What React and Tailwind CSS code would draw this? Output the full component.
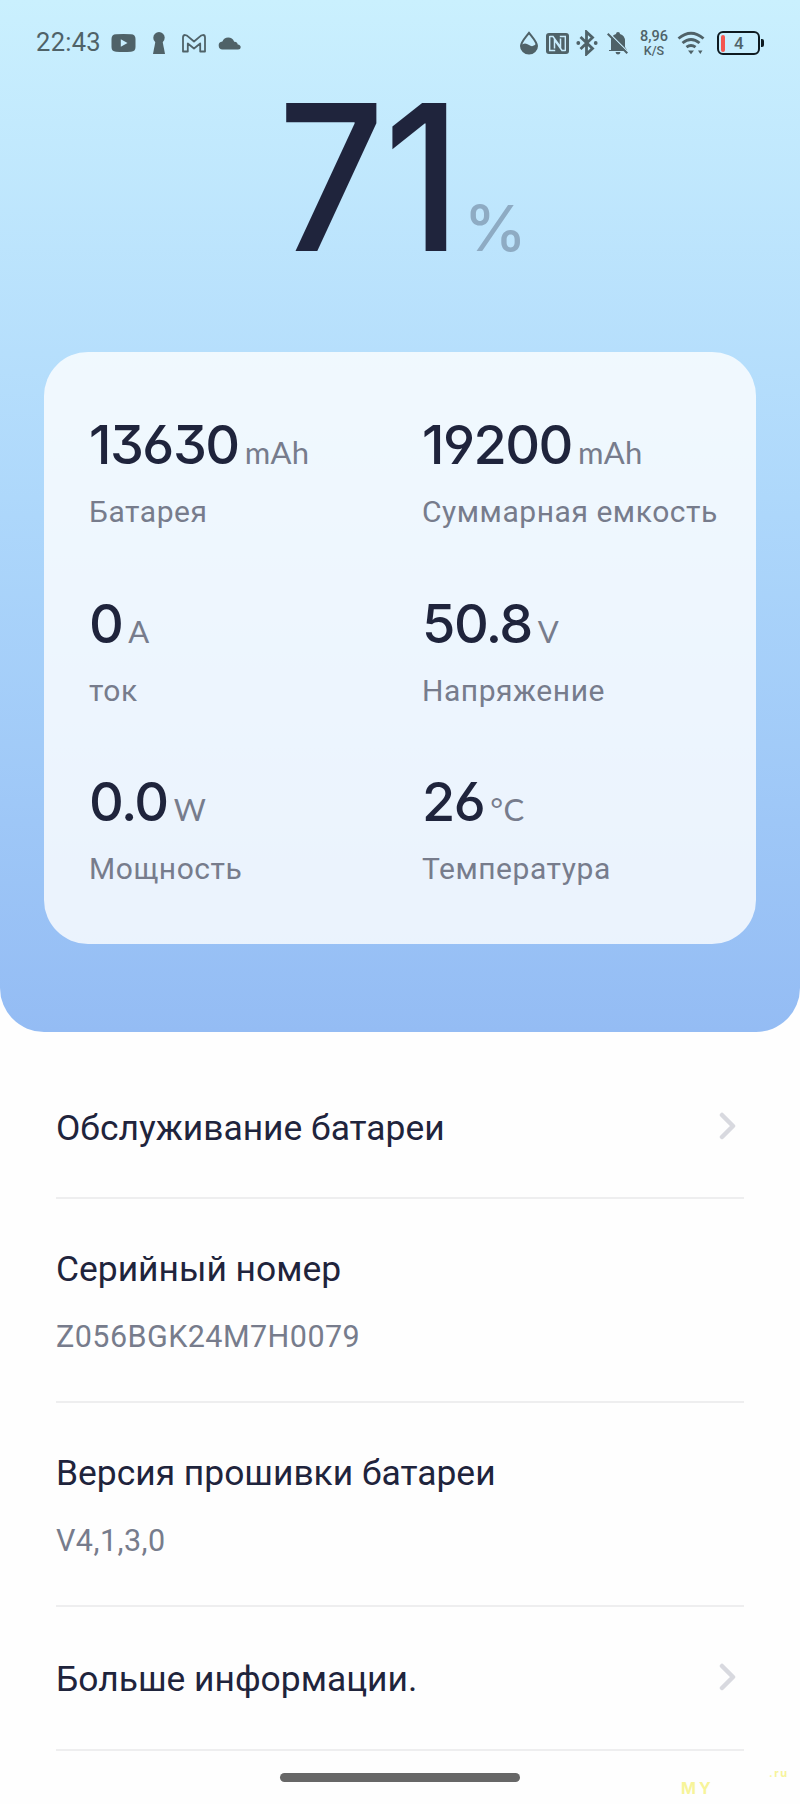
import React from 'react';

const stats = [
  { value: '13630', unit: 'mAh', label: 'Батарея' },
  { value: '19200', unit: 'mAh', label: 'Суммарная емкость' },
  { value: '0', unit: 'A', label: 'ток' },
  { value: '50.8', unit: 'V', label: 'Напряжение' },
  { value: '0.0', unit: 'W', label: 'Мощность' },
  { value: '26', unit: '°C', label: 'Температура' },
];

function StatusBar() {
  return (
    <div className="flex h-[86px] items-center pl-[36px] pr-[36px] text-[#4f6268]">
      <span className="text-[25.5px] leading-none tracking-[0.3px]">22:43</span>
      <svg className="ml-[10px]" width="25" height="18" viewBox="0 0 25 18" fill="currentColor">
        <path fillRule="evenodd" d="M5 .3Q12.500-.3 20 .3Q24.500.5 24.500 5v8q0 4.500-4.500 4.700q-7.500.6-15 0Q.5 17.500.5 13V5Q.5.500 5 .3ZM9.800 5.300v7.400l6.700-3.700Z" />
      </svg>
      <svg className="ml-[16px]" width="14" height="22" viewBox="0 0 14 22" fill="currentColor">
        <circle cx="7" cy="5.800" r="5.700" />
        <path d="M3.500 9h7l2.500 13H1Z" />
      </svg>
      <svg className="ml-[16px]" width="24" height="19" viewBox="0 0 24 19" fill="none" stroke="currentColor" strokeWidth="1.800" strokeLinejoin="round">
        <path d="M1 3.500Q1 1 3 1l2 .6L12 7.500l7-5.900L21 1q2 0 2 2.500V17.500h-4.800V9.500L12 14.500 5.800 9.500V17.500H1Z" />
      </svg>
      <svg className="ml-[12px]" width="23" height="13" viewBox="0 0 23 13" fill="currentColor">
        <path d="M5 12.500a4 4 0 0 1-.6-8Q6 .5 10.200.5t6 4.200q3-.3 3.500 2.800 3 .5 3 2.700 0 2.300-2.600 2.300Z" />
      </svg>

      <div className="ml-auto flex items-center">
        <svg width="20" height="24" viewBox="0 0 20 24">
          <path d="M10 1.800C13.500 6.500 18 11 18 15a8 7.600 0 0 1-16 0C2 11 6.500 6.500 10 1.800Z" fill="none" stroke="currentColor" strokeWidth="2" />
          <path d="M2 14q4-3 8 0t8-2v3a8 7.600 0 0 1-16 0Z" fill="currentColor" />
        </svg>
        <svg className="ml-[7px]" width="23" height="21" viewBox="0 0 23 21">
          <rect width="23" height="21" rx="3" fill="currentColor" />
          <path d="M3.500 3.500h3.500l7.500 10.500V5.500M19.500 17.500H16L8.500 7v8.500" fill="none" stroke="#c9edfe" strokeWidth="1.500" />
          <path d="M3.700 3v14.500h5.500M19.300 18V3.500h-5.500" fill="none" stroke="#c9edfe" strokeWidth="1.400" />
        </svg>
        <svg className="ml-[7px]" width="22" height="26" viewBox="0 0 22 26">
          <path d="m4.500 7 12 11.500-6 5.500V2l6 5.500L4.500 19" fill="none" stroke="currentColor" strokeWidth="2.800" />
          <circle cx="2.300" cy="13" r="1.900" fill="currentColor" />
          <circle cx="19.700" cy="13" r="1.900" fill="currentColor" />
        </svg>
        <svg className="ml-[9px]" width="22" height="24" viewBox="0 0 22 24">
          <path d="M4 19V10q0-5.500 5-7a2 2 0 0 1 4 0q5 1.500 5 7v6l2 3v1H2v-1ZM8.500 21h5q-.5 2.500-2.500 2.500T8.500 21Z" fill="currentColor" />
          <path d="m1.500 1.500 20 20" stroke="#c9edfe" strokeWidth="1.500" />
          <path d="m.7 2.700 19.600 19.600" stroke="currentColor" strokeWidth="2" />
        </svg>
        <div className="ml-[10px] flex w-[30px] flex-col items-center font-medium">
          <span className="text-[14.500px] leading-[14px]">8,96</span>
          <span className="text-[12.500px] leading-[13px]">K/S</span>
        </div>
        <svg className="ml-[8px]" width="28" height="24" viewBox="0 0 28 24" fill="none" stroke="currentColor" strokeWidth="2.900">
          <path d="M1.500 7.500q12.500-10.500 25 0M5.500 12q8.500-7 17 0M9.500 16.200q4.500-3.500 9 0" />
          <path d="M11 19.500h6L14 23.200ZM21 19.500h4.500l-2.200 3.500Z" fill="currentColor" stroke="none" />
        </svg>
        <div className="ml-[12px] flex items-center">
          <div className="flex h-[24px] w-[43px] items-center rounded-[6px] border-2 border-[#0e1a20] pl-[2px]">
            <div className="h-[17px] w-[4px] rounded-[2px] bg-[#f4564f]" />
            <span className="ml-[9px] text-[17px] leading-none font-medium">4</span>
          </div>
          <div className="ml-px h-[8px] w-[3px] rounded-r-[2px] bg-[#0e1a20]" />
        </div>
      </div>
    </div>
  );
}

function Stat({ value, unit, label }) {
  return (
    <div className="whitespace-nowrap">
      <div className="flex h-[64px] items-baseline leading-[64px]">
        <span className="font-[Inter] text-[54px] font-[450] tracking-[-1.500px] text-[#1f243c] [font-feature-settings:'cv03','cv04','cv09']">{value}</span>
        <span className="ml-[6px] font-[Lato] text-[31px] tracking-[0.300px] text-[#777c8c]">{unit}</span>
      </div>
      <p className="mt-[15px] text-[30px] leading-[40px] tracking-[0.550px] text-[#777c8c]">{label}</p>
    </div>
  );
}

function Chevron() {
  return (
    <svg className="mr-[8px] shrink-0" width="17" height="28" viewBox="0 0 17 28" fill="none" stroke="#d8d9df" strokeWidth="4.500" strokeLinecap="round" strokeLinejoin="round">
      <path d="m3 3 11 11L3 25" />
    </svg>
  );
}

function InfoRow({ title, text }) {
  return (
    <div className="h-[204px] border-b-2 border-[#eeeeef] pt-[46px]">
      <h2 className="text-[35.400px] leading-[48px] text-[#1f243c]">{title}</h2>
      <p className="mt-[24px] text-[30.500px] leading-[40px] tracking-[0.450px] text-[#777c8c]">{text}</p>
    </div>
  );
}

function App() {
  return (
    <div className="relative h-[1804px] w-[800px] overflow-hidden bg-[#fefefe] font-[Roboto,sans-serif]">
      <header className="h-[1032px] rounded-b-[44px] bg-linear-to-b from-[#caf0fe] via-[#add7fb] to-[#94bcf4]">
        <StatusBar />
        <div className="flex h-[266px] items-baseline pt-px pl-[278px]">
          <span className="w-[186px] origin-left scale-x-[0.92] font-[Inter] text-[203px] leading-[180px] font-medium tracking-[-1px] text-[#1f243c]">71</span>
          <span className="font-[Inter] text-[63px] leading-none font-[450] text-[#8eabc3]">%</span>
        </div>
        <section className="mx-[44px] grid h-[592px] grid-cols-[333px_1fr] content-start gap-y-[59.500px] rounded-[44px] bg-white/80 pt-[61px] pl-[45px]">
          {stats.map((stat) => (
            <Stat key={stat.label} {...stat} />
          ))}
        </section>
      </header>

      <main className="mx-[56px]">
        <div className="flex h-[167px] items-start justify-between border-b-2 border-[#eeeeef] pt-[72px]">
          <h2 className="text-[35.400px] leading-[48px] text-[#1f243c]">Обслуживание батареи</h2>
          <div className="pt-[8px]"><Chevron /></div>
        </div>
        <InfoRow title="Серийный номер" text="Z056BGK24M7H0079" />
        <InfoRow title="Версия прошивки батареи" text="V4,1,3,0" />
        <div className="flex h-[144px] items-start justify-between border-b-2 border-[#eeeeef] pt-[48px]">
          <h2 className="text-[35.400px] leading-[48px] text-[#1f243c]">Больше информации.</h2>
          <div className="pt-[8px]"><Chevron /></div>
        </div>
      </main>

      <div className="mx-auto mt-[22px] h-[9px] w-[240px] rounded-full bg-[#676767]" />

      <span className="absolute top-[1779px] left-[681px] font-[Inter] text-[16px] leading-[18px] font-bold tracking-[3px] text-[#f7f49a]">MY</span>
      <span className="absolute top-[1766px] left-[769px] font-[Inter] text-[11px] leading-[15px] font-bold tracking-[1.500px] text-[#f7f49a]">.ru</span>
    </div>
  );
}

export default App;
